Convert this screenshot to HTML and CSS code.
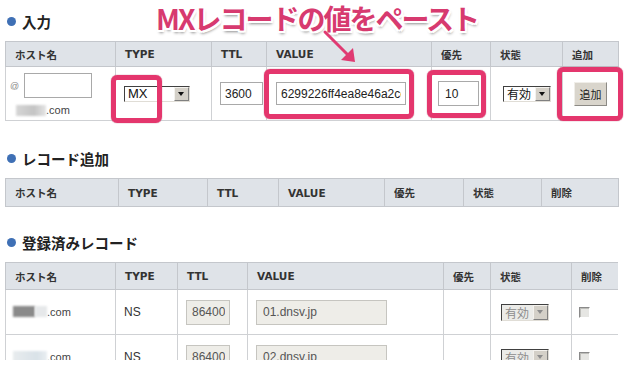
FILE: index.html
```html
<!DOCTYPE html>
<html lang="ja">
<head>
    <meta charset="UTF-8">
    <meta name="viewport" content="width=device-width, initial-scale=1.0">
    <title>DNSレコード設定</title>

    <link rel="stylesheet" href="styles.css">
</head>

<body>
    <div id="page">

        <div class="section">
            <h2 class="heading">入力</h2>
            <table class="records entry">
                <colgroup>
                    <col class="c1"><col class="c2"><col class="c3"><col class="c4"><col class="c5"><col class="c6"><col class="c7">
                </colgroup>
                <tr class="head">
                    <th>ホスト名</th><th>TYPE</th><th>TTL</th><th>VALUE</th><th>優先</th><th>状態</th><th>追加</th>
                </tr>
                <tr>
                    <td class="host">
                        <div class="hostLine"><span class="at">@</span><input class="text hostInput" type="text"></div>
                        <div class="domain"><span class="blur soft"></span>.com</div>
                    </td>
                    <td class="typeCell">
                        <span class="select typeSelect"><span class="selectValue">MX</span><span class="selectBtn"></span></span>
                    </td>
                    <td class="ttlCell"><input class="text ttlInput" type="text" value="3600"></td>
                    <td class="valueCell"><input class="text valueInput" type="text" value="6299226ff4ea8e46a2ce1f0b7d"></td>
                    <td class="prioCell"><input class="text prioInput" type="text" value="10"></td>
                    <td class="stateCell">
                        <span class="select stateSelect"><span class="selectValue">有効</span><span class="selectBtn"></span></span>
                    </td>
                    <td class="addCell"><button class="addBtn">追加</button></td>
                </tr>
            </table>
        </div>

        <div class="section second">
            <h2 class="heading">レコード追加</h2>
            <table class="records pending">
                <colgroup>
                    <col class="c1"><col class="c2"><col class="c3"><col class="c4"><col class="c5"><col class="c6"><col class="c7">
                </colgroup>
                <tr class="head">
                    <th>ホスト名</th><th>TYPE</th><th>TTL</th><th>VALUE</th><th>優先</th><th>状態</th><th>削除</th>
                </tr>
            </table>
        </div>

        <div class="section third">
            <h2 class="heading">登録済みレコード</h2>
            <div class="clip">
                <table class="records saved">
                    <colgroup>
                        <col class="c1"><col class="c2"><col class="c3"><col class="c4"><col class="c5"><col class="c6"><col class="c7">
                    </colgroup>
                    <tr class="head">
                        <th>ホスト名</th><th>TYPE</th><th>TTL</th><th>VALUE</th><th>優先</th><th>状態</th><th>削除</th>
                    </tr>
                    <tr>
                        <td class="host"><span class="blur dark"></span><span class="blur pale"></span>.com</td>
                        <td>NS</td>
                        <td><input class="text off ttlOff" type="text" value="86400" disabled></td>
                        <td><input class="text off valueOff" type="text" value="01.dnsv.jp" disabled></td>
                        <td></td>
                        <td class="stateOff">
                            <span class="select offSelect"><span class="selectValue">有効</span><span class="selectBtn"></span></span>
                        </td>
                        <td class="delCell"><span class="check"></span></td>
                    </tr>
                    <tr>
                        <td class="host"><span class="blur faint"></span>.com</td>
                        <td>NS</td>
                        <td><input class="text off ttlOff" type="text" value="86400" disabled></td>
                        <td><input class="text off valueOff" type="text" value="02.dnsv.jp" disabled></td>
                        <td></td>
                        <td class="stateOff">
                            <span class="select offSelect"><span class="selectValue">有効</span><span class="selectBtn"></span></span>
                        </td>
                        <td class="delCell"><span class="check"></span></td>
                    </tr>
                </table>
            </div>
        </div>

        <!-- annotations drawn over the screenshot -->
        <div class="callout">MXレコードの値をペースト</div>
        <svg class="arrow" width="44" height="42" viewBox="0 0 44 42">
            <line x1="7" y1="6" x2="30" y2="29" stroke="#e03a72" stroke-width="3" stroke-linecap="round"/>
            <polygon points="37,36 35,22 23,34" fill="#e03a72"/>
        </svg>
        <span class="mark markType"></span>
        <span class="mark markValue"></span>
        <span class="mark markPrio"></span>
        <span class="mark markAdd"></span>
    </div>
</body>
</html>
```

FILE: styles.css
```css
body{
    margin: 0;
    background-color: #ffffff;
    font-family: "Liberation Sans", "Noto Sans CJK JP", sans-serif;
    color: #333333;
}

#page{
    position: relative;
    height: 380px;
    padding: 11px 16px 0 5px;
    box-sizing: border-box;
    overflow: hidden;
}

.second{
    margin-top: 27px;
}

.third{
    margin-top: 25px;
}

.heading{
    display: flex;
    align-items: center;
    gap: 6px;
    margin: 0 0 10px;
    padding-left: 2px;
    height: 20px;
    font-family: "Noto Sans CJK JP", sans-serif;
    font-size: 14.5px;
    font-weight: bold;
    color: #222222;
}

.heading::before{
    content: "";
    width: 9px;
    height: 9px;
    border-radius: 50%;
    background-color: #3f70b5;
}

/* tables */

.records{
    width: 613px;
    border-collapse: collapse;
    table-layout: fixed;
    border: 1px solid #c4c7cc;
}

.records th{
    height: 24px;
    padding: 0 0 0 9px;
    background-color: #dfe3e8;
    border: 1px solid #c4c7cc;
    text-align: left;
    font-family: "DejaVu Sans", "Noto Sans CJK JP", sans-serif;
    font-size: 10.5px;
    font-weight: bold;
    color: #333333;
}

.records td{
    padding: 0 0 0 8px;
    border: 1px solid #cfd1d4;
    font-size: 12px;
    vertical-align: middle;
}

.pending th{
    height: 27px;
}

.saved th{
    height: 26px;
}

.entry .c1{ width: 110px; }
.entry .c2{ width: 96px; }
.entry .c3{ width: 55px; }
.entry .c4{ width: 165px; }
.entry .c5{ width: 59px; }
.entry .c6{ width: 72px; }
.entry .c7{ width: 56px; }

.pending .c1{ width: 113px; }
.pending .c2{ width: 89px; }
.pending .c3{ width: 71px; }
.pending .c4{ width: 106px; }
.pending .c5{ width: 79px; }
.pending .c6{ width: 78px; }
.pending .c7{ width: 77px; }

.saved .c1{ width: 110px; }
.saved .c2{ width: 62px; }
.saved .c3{ width: 70px; }
.saved .c4{ width: 196px; }
.saved .c5{ width: 47px; }
.saved .c6{ width: 81px; }
.saved .c7{ width: 47px; }

.clip{
    height: 98px;
    overflow: hidden;
}

/* entry row */

.entry td.host{
    padding: 6px 0 3px 4px;
}

.hostLine{
    display: flex;
    align-items: center;
}

.at{
    width: 14px;
    font-size: 9px;
    color: #888888;
}

.domain{
    margin-top: 5px;
    padding-left: 6px;
    height: 14px;
    font-size: 11px;
    display: flex;
    align-items: center;
    color: #444444;
}

.blur{
    display: inline-block;
    height: 11px;
    filter: blur(1px);
}

.soft{
    width: 30px;
    background: linear-gradient(90deg, #d6d6d6, #c4c4c4 60%, #e4e4e4);
}

.dark{
    width: 22px;
    background-color: #8a8a8a;
}

.pale{
    width: 12px;
    background-color: #e6e8ea;
}

.faint{
    width: 34px;
    background: linear-gradient(90deg, #e8ecee, #d9e2e8 70%, #e9eef2);
}

.text{
    box-sizing: border-box;
    height: 25px;
    padding: 0 4px;
    border: 1px solid #a9a9a9;
    background-color: #ffffff;
    font-family: "Liberation Sans", sans-serif;
    font-size: 12px;
    color: #222222;
    outline: none;
}

.hostInput{
    width: 68px;
}

.ttlInput{
    width: 43px;
    height: 23px;
}

.valueInput{
    width: 130px;
    height: 23px;
}

.prioInput{
    width: 41px;
    padding-left: 6px;
}

.typeCell{ padding-left: 8px; }
.valueCell{ padding-left: 9px !important; }
.prioCell{ padding-left: 6px !important; }
.stateCell{ padding-left: 12px !important; }
.addCell{ padding-left: 11px !important; }

/* classic windows style select */

.select{
    display: inline-flex;
    align-items: stretch;
    box-sizing: border-box;
    height: 16px;
    border: 1px solid;
    border-color: #404040 #e0ddd6 #e0ddd6 #404040;
    background-color: #ffffff;
    vertical-align: middle;
}

.selectValue{
    flex: 1;
    padding-left: 3px;
    line-height: 14px;
    font-size: 13px;
    color: #111111;
}

.selectBtn{
    position: relative;
    width: 15px;
    background-color: #d4d0c8;
    border: 1px solid;
    border-color: #f4f2ee #808080 #808080 #f4f2ee;
    box-sizing: border-box;
}

.selectBtn::after{
    content: "";
    position: absolute;
    left: 3px;
    top: 4px;
    border-left: 3.5px solid transparent;
    border-right: 3.5px solid transparent;
    border-top: 4px solid #111111;
}

.typeSelect{
    width: 66px;
}

.stateSelect{
    width: 48px;
}

.stateSelect .selectValue{
    font-size: 12px;
    font-family: "Noto Sans CJK JP", sans-serif;
}

.addBtn{
    box-sizing: border-box;
    width: 33px;
    height: 24px;
    padding: 0;
    background-color: #d9d5cc;
    border: 1px solid;
    border-color: #f0eee9 #8c8a85 #8c8a85 #f0eee9;
    font-family: "Noto Sans CJK JP", sans-serif;
    font-size: 11px;
    color: #222222;
}

/* registered rows */

.saved td{
    height: 44px;
}

.saved td.host{
    padding-left: 7px;
    font-size: 11px;
    color: #444444;
}

.saved .blur{
    vertical-align: -1px;
}

.off{
    height: 25px;
    background-color: #eeede8;
    border-color: #c6c5c0;
    color: #555555;
}

.ttlOff{
    width: 44px;
    padding-left: 5px;
}

.valueOff{
    width: 131px;
    padding-left: 6px;
}

.stateOff{
    padding-left: 10px !important;
}

.offSelect{
    width: 48px;
    height: 17px;
    background-color: #ebebe8;
}

.offSelect .selectValue{
    font-family: "Noto Sans CJK JP", sans-serif;
    font-size: 12px;
    line-height: 15px;
    color: #8d8d8d;
}

.offSelect .selectBtn::after{
    border-top-color: #8d8d8d;
}

.delCell{
    padding-left: 7px !important;
}

.check{
    display: inline-block;
    box-sizing: border-box;
    width: 11px;
    height: 11px;
    border: 1px solid;
    border-color: #8a8a8a #ffffff #ffffff #8a8a8a;
    background-color: #e6e6e3;
    box-shadow: inset 1px 1px 0 #bdbdb9;
    vertical-align: middle;
}

/* annotations */

.callout{
    position: absolute;
    left: 156px;
    top: -2px;
    font-family: "Noto Sans CJK JP", sans-serif;
    font-size: 28px;
    font-weight: bold;
    letter-spacing: -2px;
    line-height: 40px;
    color: #d73a6f;
    white-space: nowrap;
    text-shadow:
        -2px -2px 0 #ffffff, 2px -2px 0 #ffffff, -2px 2px 0 #ffffff, 2px 2px 0 #ffffff,
        0 -2px 0 #ffffff, 0 2px 0 #ffffff, -2px 0 0 #ffffff, 2px 0 0 #ffffff,
        1px 3px 3px rgba(0, 0, 0, 0.45);
}

.arrow{
    position: absolute;
    left: 318px;
    top: 26px;
}

.mark{
    position: absolute;
    box-sizing: border-box;
    border: 5px solid #e4366d;
    border-radius: 6px;
    box-shadow: 0 0 1px #9c2048;
}

.markType{
    left: 111px;
    top: 75px;
    width: 51px;
    height: 48px;
}

.markValue{
    left: 264px;
    top: 69px;
    width: 150px;
    height: 50px;
}

.markPrio{
    left: 427px;
    top: 70px;
    width: 59px;
    height: 48px;
}

.markAdd{
    left: 557px;
    top: 67px;
    width: 66px;
    height: 54px;
}
```
